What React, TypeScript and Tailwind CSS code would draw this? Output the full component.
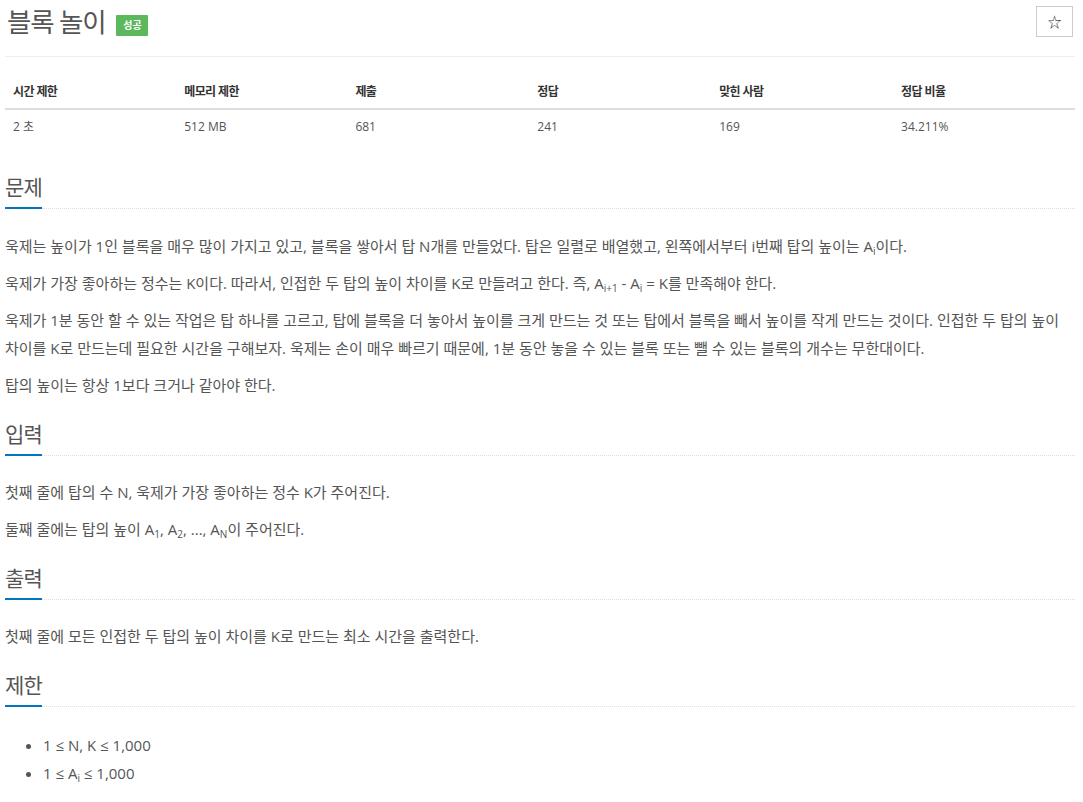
import React from "react";

const font = { fontFamily: '"Open Sans", "Noto Sans CJK KR", sans-serif' };

function SectionTitle({ children, first }: { children: React.ReactNode; first?: boolean }) {
  return (
    <div className={`border-b border-dotted border-[#dddddd] ${first ? "mt-[28px]" : "mt-[20px]"}`}>
      <h2 className="inline-block border-b-2 border-[#0076c0] -mb-[1px] pb-[5px] text-[21px] leading-[30px] tracking-[-0.8px] text-[#555555] font-normal">
        {children}
      </h2>
    </div>
  );
}

function P({ children }: { children: React.ReactNode }) {
  return <p className="mb-[9px] text-[15px] leading-[28px] text-[#555555]">{children}</p>;
}

function S({ children }: { children: React.ReactNode }) {
  return <sub className="text-[10px]">{children}</sub>;
}

export default function App() {
  const headers = ["시간 제한", "메모리 제한", "제출", "정답", "맞힌 사람", "정답 비율"];
  const values = ["2 초", "512 MB", "681", "241", "169", "34.211%"];
  const widths = ["w-[16%]", "w-[16%]", "w-[17%]", "w-[17%]", "w-[17%]", "w-[17%]"];
  return (
    <div className="pl-[5px] pr-[8px] bg-white text-[#555555]" style={font}>
      <div className="flex items-start justify-between border-b border-[#eeeeee] pb-[12px]">
        <div className="flex items-center h-[44px]">
          <span className="text-[26.5px] tracking-[-1.2px] leading-[44px] text-[#555555] pl-[2px]">블록 놀이</span>
          <span className="ml-[11px] mt-[6px] inline-flex items-center justify-center w-[32px] h-[21px] bg-[#5cb85c] text-white text-[10px] font-bold rounded-[1px]">
            성공
          </span>
        </div>
        <button className="mt-[6px] mr-[2px] w-[37px] h-[31px] border border-[#cccccc] bg-white flex items-center justify-center text-[14px] text-[#333333]">
          ☆
        </button>
      </div>

      <table className="mt-[18px] w-full border-collapse table-fixed">
        <thead>
          <tr className="border-b-2 border-[#dddddd]">
            {headers.map((h, i) => (
              <th
                key={h}
                className={`${widths[i]} px-[8px] py-[8px] text-left text-[12px] leading-[17px] font-bold tracking-[-0.6px] text-[#333333]`}
              >
                {h}
              </th>
            ))}
          </tr>
        </thead>
        <tbody>
          <tr>
            {values.map((v, i) => (
              <td key={i} className="px-[8px] py-[8px] text-[12px] leading-[18px] text-[#555555]">
                {v}
              </td>
            ))}
          </tr>
        </tbody>
      </table>

      <SectionTitle first>문제</SectionTitle>
      <div className="mt-[23px]">
        <P>
          욱제는 높이가 1인 블록을 매우 많이 가지고 있고, 블록을 쌓아서 탑 N개를 만들었다. 탑은 일렬로 배열했고, 왼쪽에서부터 i번째 탑의 높이는 A<S>i</S>이다.
        </P>
        <P>
          욱제가 가장 좋아하는 정수는 K이다. 따라서, 인접한 두 탑의 높이 차이를 K로 만들려고 한다. 즉, A<S>i+1</S> - A<S>i</S> = K를 만족해야 한다.
        </P>
        <P>
          욱제가 1분 동안 할 수 있는 작업은 탑 하나를 고르고, 탑에 블록을 더 놓아서 높이를 크게 만드는 것 또는 탑에서 블록을 빼서 높이를 작게 만드는 것이다. 인접한 두 탑의 높이 차이를 K로 만드는데 필요한 시간을 구해보자. 욱제는 손이 매우 빠르기 때문에, 1분 동안 놓을 수 있는 블록 또는 뺄 수 있는 블록의 개수는 무한대이다.
        </P>
        <P>탑의 높이는 항상 1보다 크거나 같아야 한다.</P>
      </div>

      <SectionTitle>입력</SectionTitle>
      <div className="mt-[22px]">
        <P>첫째 줄에 탑의 수 N, 욱제가 가장 좋아하는 정수 K가 주어진다.</P>
        <P>
          둘째 줄에는 탑의 높이 A<S>1</S>, A<S>2</S>, ..., A<S>N</S>이 주어진다.
        </P>
      </div>

      <SectionTitle>출력</SectionTitle>
      <div className="mt-[22px]">
        <P>첫째 줄에 모든 인접한 두 탑의 높이 차이를 K로 만드는 최소 시간을 출력한다.</P>
      </div>

      <SectionTitle>제한</SectionTitle>
      <ul className="mt-[24px] pl-[38px] list-disc text-[15px] leading-[28px] text-[#555555]">
        <li>1 ≤ N, K ≤ 1,000</li>
        <li>
          1 ≤ A<S>i</S> ≤ 1,000
        </li>
      </ul>
    </div>
  );
}
